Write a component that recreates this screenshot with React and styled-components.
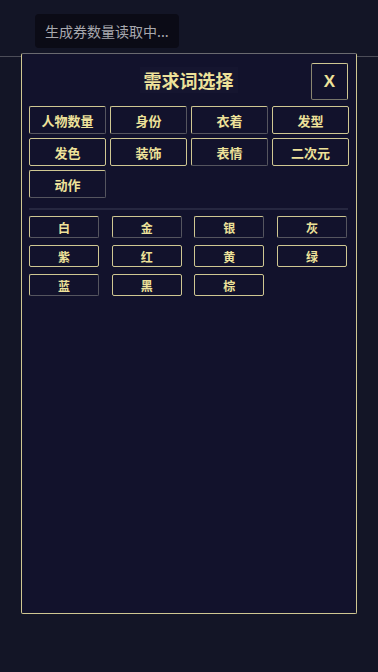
import React from 'react'
import styled, { createGlobalStyle } from 'styled-components'

const GlobalStyle = createGlobalStyle`
  html, body {
    margin: 0;
    padding: 0;
    background: #131526;
    font-family: "Noto Sans CJK SC", "Noto Sans", sans-serif;
  }
`

const LIGHT = '#cfc792'
const GRAY = '#55555f'
const YELLOW = '#eee29a'

const Page = styled.div`
  min-height: 100vh;
  background: #131526;
`

const TopBar = styled.div`
  height: 57px;
  border-bottom: 1px solid #4c4d58;
  box-sizing: border-box;
  padding: 14px 0 0 35px;
`

const Toast = styled.div`
  display: inline-flex;
  align-items: center;
  height: 34px;
  padding: 0 10px;
  border-radius: 4px;
  background: #0b0b16;
  color: #a8a8ae;
  font-size: 14px;
`

const Modal = styled.div`
  position: absolute;
  left: 21px;
  top: 53px;
  width: 336px;
  height: 561px;
  box-sizing: border-box;
  background: #12122c;
  border: 1px solid ${LIGHT};
  border-top-color: #6a6a70;
  border-radius: 2px;
  padding: 8px 8px 0 7px;
`

const Header = styled.div`
  position: relative;
  height: 38px;
  display: flex;
  align-items: center;
  justify-content: center;
  margin-bottom: 6px;
`

const Title = styled.h2`
  margin: 0 0 2px;
  padding: 0 4px;
  background: #15152f;
  color: ${YELLOW};
  font-size: 18px;
  font-weight: 700;
`

const CloseButton = styled.button`
  position: absolute;
  right: 0;
  top: 1px;
  width: 37px;
  height: 37px;
  box-sizing: border-box;
  background: transparent;
  border: 1px solid ${LIGHT};
  border-left-color: #8a8670;
  border-bottom-color: #77756a;
  border-radius: 2px;
  color: ${YELLOW};
  font-family: "Liberation Sans", sans-serif;
  font-size: 17px;
  font-weight: 700;
  padding: 0;
`

const TagGrid = styled.div`
  display: grid;
  grid-template-columns: repeat(4, 77px);
  gap: 4px;
`

const Chip = styled.button`
  box-sizing: border-box;
  height: ${({ $h }) => $h}px;
  background: transparent;
  border: 1px solid ${LIGHT};
  border-radius: 2px;
  border-bottom-color: ${({ $dim }) => ($dim ? GRAY : LIGHT)};
  border-right-color: ${({ $dim }) => ($dim ? GRAY : LIGHT)};
  color: ${YELLOW};
  font-family: inherit;
  font-size: ${({ $fs }) => $fs}px;
  font-weight: 700;
  padding: 0;
`

const Divider = styled.div`
  height: 2px;
  background: #262740;
  margin: 10px 0 6px;
  width: 319px;
`

const ColorGrid = styled.div`
  display: grid;
  grid-template-columns: repeat(4, 70px);
  justify-content: space-between;
  row-gap: 7px;
  width: 318px;
`

const tags = [
  ['人物数量', true], ['身份', true], ['衣着', true], ['发型', false],
  ['发色', false], ['装饰', false], ['表情', true], ['二次元', false],
  ['动作', true]
]

const colors = [
  ['白', true], ['金', true], ['银', true], ['灰', true],
  ['紫', false], ['红', false], ['黄', false], ['绿', false],
  ['蓝', true], ['黑', false], ['棕', false]
]

const App = () => (
  <Page>
    <GlobalStyle />
    <TopBar>
      <Toast>生成券数量读取中...</Toast>
    </TopBar>
    <Modal>
      <Header>
        <Title>需求词选择</Title>
        <CloseButton>X</CloseButton>
      </Header>
      <TagGrid>
        {tags.map(([t, dim]) => (
          <Chip key={t} $h={28} $fs={13} $dim={dim}>{t}</Chip>
        ))}
      </TagGrid>
      <Divider />
      <ColorGrid>
        {colors.map(([c, dim]) => (
          <Chip key={c} $h={22} $fs={12} $dim={dim}>{c}</Chip>
        ))}
      </ColorGrid>
    </Modal>
  </Page>
)

export default App
